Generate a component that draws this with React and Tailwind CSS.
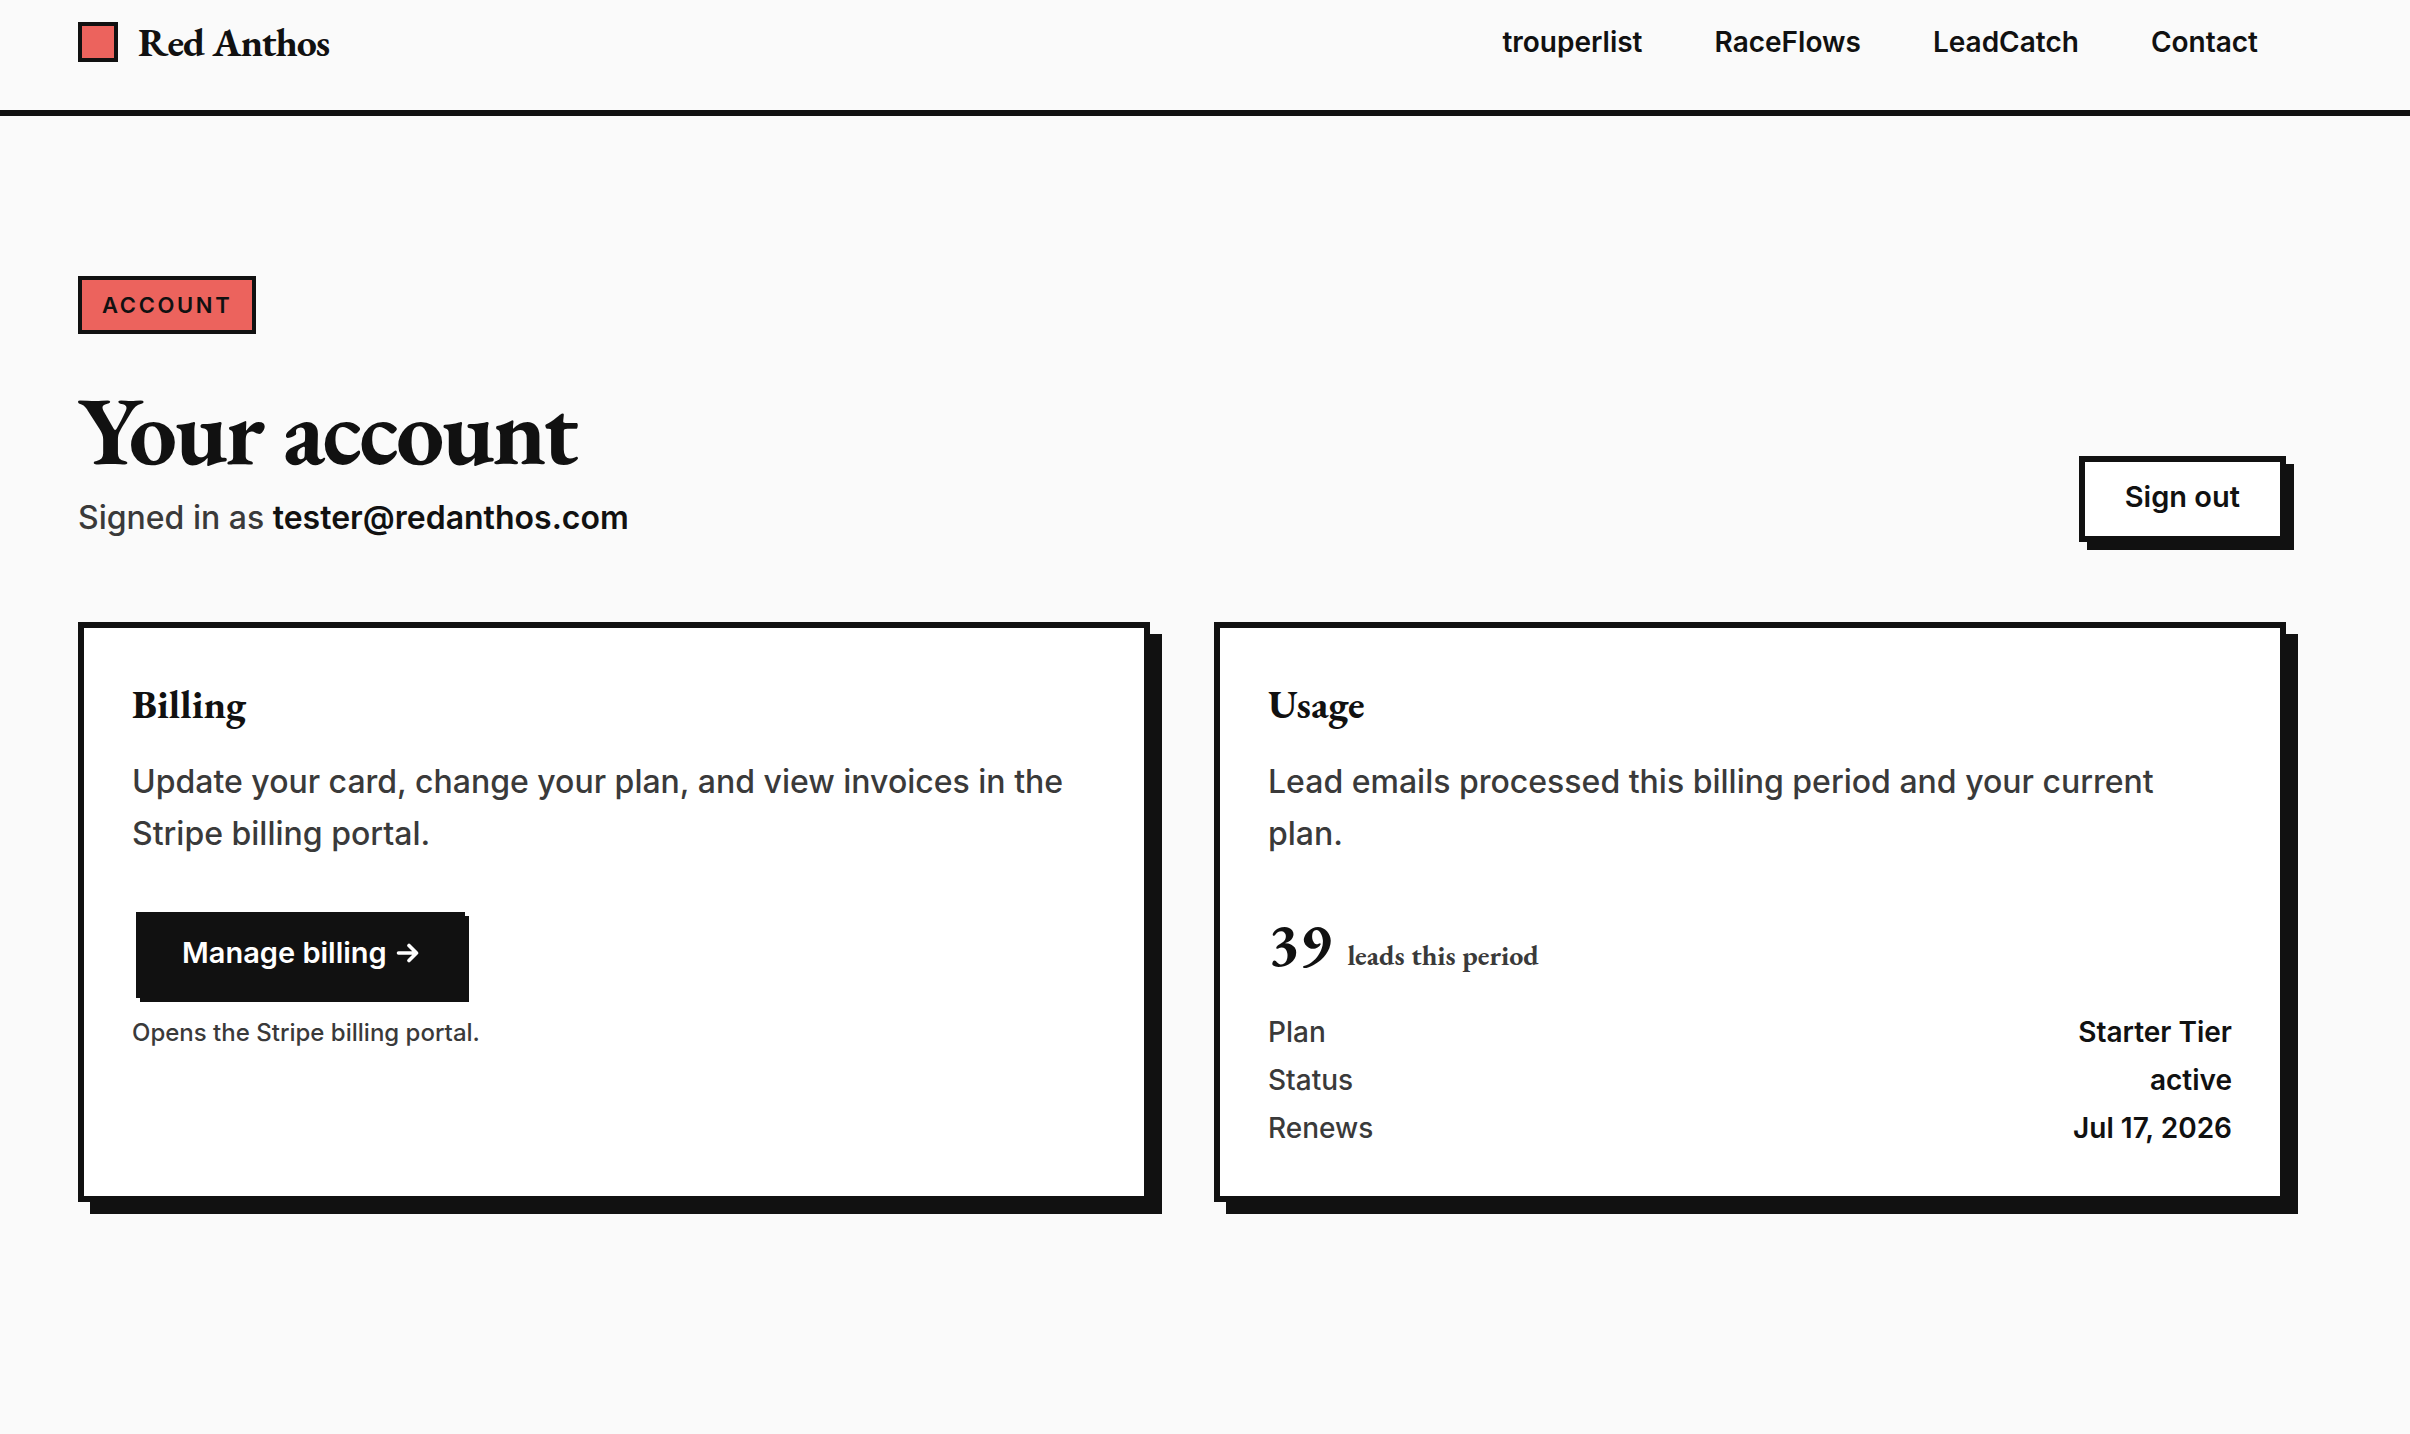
const serif = 'font-["EB_Garamond","Liberation_Serif",serif]';

const navLinks = ["trouperlist", "RaceFlows", "LeadCatch", "Contact"];

const usageRows = [
  ["Plan", "Starter Tier"],
  ["Status", "active"],
  ["Renews", "Jul 17, 2026"],
];

function Card({ title, description, children }) {
  return (
    <section className="border-6 border-[#111111] bg-white p-12 shadow-[12px_12px_0_#111111]">
      <h2 className={`${serif} mb-6 text-[40px] leading-[56px] font-bold`}>{title}</h2>
      <p className="text-[32px] leading-[52px] text-[#3a3a3a]">{description}</p>
      {children}
    </section>
  );
}

export default function App() {
  return (
    <div className='min-h-screen bg-[#fafafa] font-["Inter",sans-serif] font-medium text-[#111111]'>
      <header className="flex items-center justify-between border-b-6 border-[#111111] pt-1.5 pr-[152px] pb-8 pl-[78px]">
        <a href="#home" className="flex h-18 items-center gap-5">
          <span className="size-10 border-4 border-[#111111] bg-[#ec635d]" />
          <span className={`${serif} text-[40px] leading-10 font-bold tracking-tight`}>Red Anthos</span>
        </a>
        <nav className="flex gap-18 text-[28px] leading-10 font-semibold">
          {navLinks.map((name) => (
            <a key={name} href={`#${name}`}>{name}</a>
          ))}
        </nav>
      </header>

      <main className="pt-40 pr-[124px] pb-40 pl-[78px]">
        <span className="mb-12 block w-fit border-4 border-[#111111] bg-[#ec635d] px-5 py-2 text-[22px] leading-[34px] font-semibold tracking-[0.12em]">
          ACCOUNT
        </span>

        <div className="flex items-end justify-between">
          <div>
            <h1 className={`${serif} mb-4 text-[96px] leading-24 font-bold tracking-tight`}>Your account</h1>
            <p className="text-[32px] leading-12 text-[#3a3a3a]">
              Signed in as <strong className="font-semibold text-[#111111]">tester@redanthos.com</strong>
            </p>
          </div>
          <button
            type="button"
            className="border-6 border-[#111111] bg-white px-10 pt-3.5 pb-4.5 text-[29px] leading-[42px] font-semibold shadow-[8px_8px_0_#111111]"
          >
            Sign out
          </button>
        </div>

        <div className="mt-20 grid grid-cols-2 gap-16">
          <Card
            title="Billing"
            description="Update your card, change your plan, and view invoices in the Stripe billing portal."
          >
            <button
              type="button"
              className="mt-[52px] ml-1 flex items-center gap-2 border-6 border-[#111111] bg-[#111111] px-10 pt-3.5 pb-4.5 text-[29px] leading-[42px] font-semibold text-white shadow-[4px_4px_0_#111111]"
            >
              Manage billing
              <svg viewBox="0 0 24 24" className="size-6" fill="none" stroke="currentColor" strokeWidth="3.6" strokeLinecap="round" strokeLinejoin="round" aria-hidden="true">
                <path d="M3.5 12H21M14 4.5L21.5 12L14 19.5" />
              </svg>
            </button>
            <p className="mt-[15px] text-[24px] leading-10 text-[#3a3a3a]">Opens the Stripe billing portal.</p>
          </Card>

          <Card
            title="Usage"
            description="Lead emails processed this billing period and your current plan."
          >
            <p className={`${serif} mt-[52px] flex items-baseline gap-4 text-[60px] leading-16 font-bold`}>
              39 <span className="text-[28px] leading-8 text-[#3a3a3a]">leads this period</span>
            </p>
            <dl className="mt-9 flex flex-col gap-2 text-[28px] leading-10">
              {usageRows.map(([label, value]) => (
                <div key={label} className="flex justify-between">
                  <dt className="text-[#3a3a3a]">{label}</dt>
                  <dd className="font-semibold">{value}</dd>
                </div>
              ))}
            </dl>
          </Card>
        </div>
      </main>
    </div>
  );
}
